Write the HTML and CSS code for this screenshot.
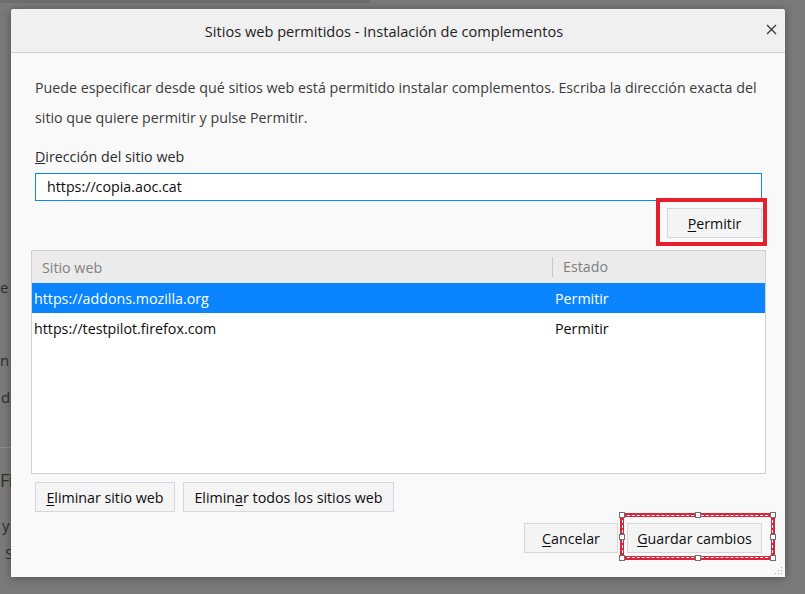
FILE: index.html
```html
<!DOCTYPE html>
<html lang="es">
<head>
<meta charset="utf-8">
<title>Sitios web permitidos</title>
<link rel="stylesheet" href="styles.css">
</head>
<body>
<div class="page-behind">
  <div class="top-strip"></div>
  <div class="behind-line l1">e r</div>
  <div class="behind-line l2">n i</div>
  <div class="behind-line l3">d</div>
  <div class="behind-rule"></div>
  <div class="behind-line big">Fi</div>
  <div class="behind-line l4">y</div>
  <div class="behind-line l5">S</div>
</div>

<div class="dialog">
  <header class="titlebar">
    <span class="title">Sitios web permitidos - Instalación de complementos</span>
    <span class="close">
      <svg width="11" height="11" viewBox="0 0 11 11"><path d="M1 1 L10 10 M10 1 L1 10" stroke="#3d3d3d" stroke-width="1.4" fill="none"/></svg>
    </span>
  </header>
  <div class="content">
    <p class="desc">Puede especificar desde qué sitios web está permitido instalar complementos. Escriba la dirección exacta del sitio que quiere permitir y pulse Permitir.</p>
    <div class="field-label"><u>D</u>irección del sitio web</div>
    <div class="url-input">https://copia.aoc.cat</div>
    <div class="allow-row">
      <span class="btn btn-allow"><u>P</u>ermitir</span>
    </div>
    <div class="list">
      <div class="list-head">
        <div class="col col-site">Sitio web</div>
        <div class="col col-state">Estado</div>
      </div>
      <div class="list-row selected">
        <div class="cell">https://addons.mozilla.org</div>
        <div class="cell">Permitir</div>
      </div>
      <div class="list-row">
        <div class="cell">https://testpilot.firefox.com</div>
        <div class="cell">Permitir</div>
      </div>
    </div>
    <div class="remove-row">
      <span class="btn btn-remove"><u>E</u>liminar sitio web</span>
      <span class="btn btn-remove-all">Elimin<u>a</u>r todos los sitios web</span>
    </div>
    <div class="footer">
      <span class="btn btn-cancel"><u>C</u>ancelar</span>
      <span class="btn btn-save"><u>G</u>uardar cambios
        <span class="sel">
          <i class="h h-tl"></i><i class="h h-tm"></i><i class="h h-tr"></i>
          <i class="h h-ml"></i><i class="h h-mr"></i>
          <i class="h h-bl"></i><i class="h h-bm"></i><i class="h h-br"></i>
        </span>
      </span>
    </div>
  </div>
  <svg class="grip" width="8" height="8" viewBox="0 0 8 8">
    <rect x="6" y="0" width="1.2" height="1.2" fill="#b5b5b5"/>
    <rect x="3" y="3" width="1.2" height="1.2" fill="#b5b5b5"/>
    <rect x="6" y="3" width="1.2" height="1.2" fill="#b5b5b5"/>
    <rect x="0" y="6" width="1.2" height="1.2" fill="#b5b5b5"/>
    <rect x="3" y="6" width="1.2" height="1.2" fill="#b5b5b5"/>
    <rect x="6" y="6" width="1.2" height="1.2" fill="#b5b5b5"/>
  </svg>
</div>
</body>
</html>
```
FILE: styles.css
```css
* { box-sizing: border-box; }
html, body { margin: 0; padding: 0; }
body {
  width: 805px;
  height: 594px;
  overflow: hidden;
  background: #7a7a7a;
  font-family: "Open Sans", "Noto Sans", sans-serif;
  color: #0c0c0d;
  position: relative;
}

/* dimmed page behind the dialog */
.page-behind {
  display: flex;
  flex-direction: column;
  color: #2e2e2e;
  font-size: 15px;
  line-height: 20px;
}
.top-strip { width: 370px; height: 3px; background: #6e6e6e; }
.behind-line { white-space: nowrap; }
.l1 { margin-top: 274px; }
.l2 { margin-top: 53px; }
.l3 { margin-top: 17px; margin-left: 1px; }
.behind-rule { margin-top: 40px; width: 12px; height: 1px; background: #8e8e8e; }
.big { margin-top: 20px; font-size: 18px; line-height: 24px; letter-spacing: -0.5px; }
.l4 { margin-top: 23px; margin-left: 2px; }
.l5 { margin-top: 8px; margin-left: 5px; }

/* dialog */
.dialog {
  position: absolute;
  left: 11px;
  top: 9px;
  width: 774px;
  height: 568px;
  background: #f9f9fa;
  border-radius: 3px 3px 0 0;
  box-shadow: 0 1px 10px rgba(0,0,0,0.35);
  display: flex;
  flex-direction: column;
}
.titlebar {
  height: 44px;
  flex: none;
  background: #f0f0f0;
  border-bottom: 1px solid #cfcfcf;
  border-radius: 3px 3px 0 0;
  display: flex;
  align-items: center;
  justify-content: center;
  padding-right: 28px;
  position: relative;
}
.title { font-size: 14.6px; color: #222; }
.close {
  position: absolute;
  right: 8px;
  top: 15px;
  width: 11px;
  height: 11px;
  display: flex;
}

.content {
  padding: 20px 23px 0 24px;
  display: flex;
  flex-direction: column;
  font-size: 14.25px;
}
.desc {
  margin: 0;
  line-height: 30px;
  color: #3b3b3b;
}
.field-label {
  margin-top: 14px;
  line-height: 20px;
  color: #2b2b2b;
}
.url-input {
  margin-top: 6px;
  height: 28px;
  border: 1px solid #0a84ff;
  background: #fff;
  padding: 0 11px;
  line-height: 26px;
  color: #0c0c0d;
}
.allow-row {
  margin-top: 7px;
  display: flex;
  justify-content: flex-end;
}
.btn {
  display: inline-flex;
  align-items: center;
  justify-content: center;
  height: 30px;
  background: #f4f4f5;
  border: 1px solid #d7d7db;
  color: #0c0c0d;
  white-space: nowrap;
  position: relative;
}
.btn u { text-decoration-thickness: 1px; text-underline-offset: 2px; }
.btn-allow { width: 95px; }
.btn-allow::after {
  content: "";
  position: absolute;
  top: -11px;
  left: -12px;
  right: -6px;
  bottom: -9px;
  border: 4px solid #e3202b;
}

.list {
  margin: 12px -4px 0 -4px;
  height: 224px;
  background: #fff;
  border: 1px solid #d0d0d3;
}
.list-head {
  height: 32px;
  background: #ebebeb;
  display: grid;
  grid-template-columns: 520px 1fr;
  align-items: center;
  color: #808080;
}
.col-site { padding-left: 10px; }
.col-state {
  height: 20px;
  line-height: 20px;
  border-left: 1px solid #c8c8c8;
  padding-left: 10px;
}
.list-row {
  height: 30px;
  display: grid;
  grid-template-columns: 521px 1fr;
  align-items: center;
  color: #0c0c0d;
}
.list-row .cell { padding-left: 2px; }
.list-row.selected { background: #0a84ff; color: #fff; }

.remove-row {
  margin-top: 8px;
  display: flex;
  gap: 8px;
}
.btn-remove { width: 140px; }
.btn-remove-all { width: 211px; }

.footer {
  margin-top: 11px;
  display: flex;
  justify-content: flex-end;
  gap: 9px;
}
.btn-cancel { width: 94px; }
.btn-save { width: 135px; }
.sel {
  position: absolute;
  top: -11px;
  left: -8px;
  right: -14px;
  bottom: -8px;
  border: 4px solid #d9243a;
  outline: 1px dashed #ffffff;
  outline-offset: -3px;
}
.h {
  position: absolute;
  width: 6px;
  height: 6px;
  background: #fff;
  border: 1px solid #6e6e6e;
}
.h-tl { left: -5px; top: -5px; }
.h-tm { left: calc(50% - 3px); top: -5px; }
.h-tr { right: -5px; top: -5px; }
.h-ml { left: -5px; top: calc(50% - 3px); }
.h-mr { right: -5px; top: calc(50% - 3px); }
.h-bl { left: -5px; bottom: -5px; }
.h-bm { left: calc(50% - 3px); bottom: -5px; }
.h-br { right: -5px; bottom: -5px; }

.grip {
  position: absolute;
  right: 2px;
  bottom: 2px;
}
```
